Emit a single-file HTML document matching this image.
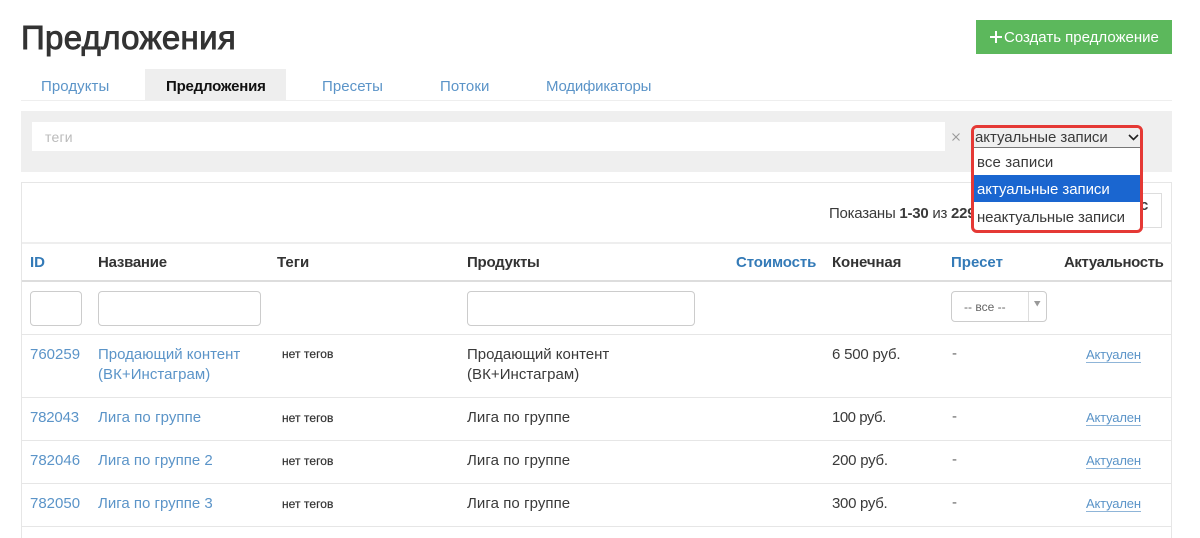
<!DOCTYPE html>
<html lang="ru"><head><meta charset="utf-8"><title>Предложения</title>
<style>
html,body{margin:0;padding:0;background:#fff}
body{width:1200px;height:538px;position:relative;overflow:hidden;font-family:"Liberation Sans",sans-serif;font-size:15px;color:#3a3a3a}
.a{position:absolute;white-space:nowrap;line-height:20px}
.b{position:absolute;box-sizing:border-box}
.h{font-weight:bold;color:#333}
.t{font-size:12px;color:#333;-webkit-text-stroke:.2px #333;letter-spacing:.05px}
.i{position:absolute;box-sizing:border-box;border:1px solid #ccc;border-radius:4px;background:#fff}
.r{position:absolute;left:22px;width:1150px;height:1px;background:#e6e6e6}
.u{color:#5b94c8;font-size:13px;border-bottom:1px solid #8fb5d8;line-height:15px;letter-spacing:-.17px}
</style></head><body>
<h1 class="a" style="left:21px;top:18px;margin:0;font-size:33px;line-height:40px;font-weight:normal;color:#333;letter-spacing:.32px;-webkit-text-stroke:.9px #333">Предложения</h1>
<div class="b" style="left:976px;top:20px;width:196px;height:34px;background:#5cb85c"></div>
<svg class="b" style="left:990px;top:31px" width="12" height="12"><path d="M6 0v12M0 6h12" stroke="#fff" stroke-width="2"/></svg>
<div class="a" style="left:1004px;top:28px;color:#fff">Создать предложение</div>

<div class="b" style="left:145px;top:69px;width:141px;height:31px;background:#eee"></div>
<div class="b" style="left:21px;top:100px;width:1151px;height:1px;background:#eee"></div>
<a class="a" style="left:41px;top:77px;color:#5b94c8;letter-spacing:.07px">Продукты</a>
<b class="a" style="left:166px;top:77px;color:#111;letter-spacing:-.2px">Предложения</b>
<a class="a" style="left:322px;top:77px;color:#5b94c8;letter-spacing:.07px">Пресеты</a>
<a class="a" style="left:440px;top:77px;color:#5b94c8;letter-spacing:.13px">Потоки</a>
<a class="a" style="left:546px;top:77px;color:#5b94c8;letter-spacing:-.2px">Модификаторы</a>

<div class="b" style="left:21px;top:111px;width:1151px;height:61px;background:#efefef"></div>
<div class="b" style="left:32px;top:122px;width:913px;height:29px;background:#fff"></div>
<div class="a" style="left:45px;top:127px;color:#bbb;font-size:14px;letter-spacing:.2px">теги</div>
<svg class="b" style="left:952px;top:133px" width="8" height="8"><path d="M.5.5l7 7M7.500.5l-7 7" stroke="#999" stroke-width="1.100"/></svg>

<div class="b" style="left:21px;top:182px;width:1151px;height:356px;border:1px solid #e6e6e6;border-bottom:0"></div>
<div class="a" style="left:829px;top:204px;letter-spacing:-.25px">Показаны <b>1-30</b> из <b>229</b></div>
<div class="b" style="left:1100px;top:193px;width:62px;height:35px;border:1px solid #ddd;background:#fff"></div>
<b class="a" style="left:1140px;top:196px">с</b>

<div class="b" style="left:22px;top:242px;width:1150px;height:2px;background:#eee"></div>
<b class="a" style="left:30px;top:253px;color:#337ab7">ID</b>
<b class="a h" style="left:98px;top:253px;letter-spacing:-.25px">Название</b>
<b class="a h" style="left:277px;top:253px">Теги</b>
<b class="a h" style="left:467px;top:253px;letter-spacing:-.25px">Продукты</b>
<b class="a" style="left:736px;top:253px;color:#337ab7;letter-spacing:-.1px">Стоимость</b>
<b class="a h" style="left:832px;top:253px;letter-spacing:-.12px">Конечная</b>
<b class="a" style="left:951px;top:253px;color:#337ab7">Пресет</b>
<b class="a h" style="left:1064px;top:253px;letter-spacing:-.4px">Актуальность</b>
<div class="b" style="left:22px;top:280px;width:1150px;height:2px;background:#ddd"></div>

<div class="i" style="left:30px;top:291px;width:52px;height:35px"></div>
<div class="i" style="left:98px;top:291px;width:163px;height:35px"></div>
<div class="i" style="left:467px;top:291px;width:228px;height:35px"></div>
<div class="i" style="left:951px;top:291px;width:96px;height:31px"></div>
<div class="b" style="left:1028px;top:292px;width:1px;height:29px;background:#ddd"></div>
<svg class="b" style="left:1034px;top:301px" width="7" height="6"><path d="M0 0h6.500L3.250 5.500z" fill="#999"/></svg>
<div class="a" style="left:964px;top:297px;font-size:12px;color:#666">-- все --</div>

<div class="r" style="top:334px"></div>
<div class="r" style="top:397px"></div>
<div class="r" style="top:440px"></div>
<div class="r" style="top:483px"></div>
<div class="r" style="top:526px"></div>

<a class="a" style="left:30px;top:345px;color:#5b94c8">760259</a>
<a class="a" style="left:98px;top:345px;color:#5b94c8">Продающий контент</a>
<a class="a" style="left:98px;top:365px;color:#5b94c8;letter-spacing:.05px">(ВК+Инстаграм)</a>
<div class="a t" style="left:282px;top:344px">нет тегов</div>
<div class="a" style="left:467px;top:345px">Продающий контент</div>
<div class="a" style="left:467px;top:365px;letter-spacing:.05px">(ВК+Инстаграм)</div>
<div class="a" style="left:832px;top:345px;letter-spacing:-.2px">6 500 руб.</div>
<div class="a" style="left:952px;top:344px;color:#666">-</div>
<span class="a u" style="left:1086px;top:347px">Актуален</span>

<a class="a" style="left:30px;top:408px;color:#5b94c8;letter-spacing:-.2px">782043</a>
<a class="a" style="left:98px;top:408px;color:#5b94c8;letter-spacing:.07px">Лига по группе</a>
<div class="a t" style="left:282px;top:408px">нет тегов</div>
<div class="a" style="left:467px;top:408px;letter-spacing:.07px">Лига по группе</div>
<div class="a" style="left:832px;top:408px;letter-spacing:-.5px">100 руб.</div>
<div class="a" style="left:952px;top:407px;color:#666">-</div>
<span class="a u" style="left:1086px;top:410px">Актуален</span>

<a class="a" style="left:30px;top:451px;color:#5b94c8">782046</a>
<a class="a" style="left:98px;top:451px;color:#5b94c8">Лига по группе 2</a>
<div class="a t" style="left:282px;top:451px">нет тегов</div>
<div class="a" style="left:467px;top:451px;letter-spacing:.07px">Лига по группе</div>
<div class="a" style="left:832px;top:451px;letter-spacing:-.25px">200 руб.</div>
<div class="a" style="left:952px;top:450px;color:#666">-</div>
<span class="a u" style="left:1086px;top:453px">Актуален</span>

<a class="a" style="left:30px;top:494px;color:#5b94c8">782050</a>
<a class="a" style="left:98px;top:494px;color:#5b94c8">Лига по группе 3</a>
<div class="a t" style="left:282px;top:494px">нет тегов</div>
<div class="a" style="left:467px;top:494px;letter-spacing:.07px">Лига по группе</div>
<div class="a" style="left:832px;top:494px;letter-spacing:-.3px">300 руб.</div>
<div class="a" style="left:952px;top:493px;color:#666">-</div>
<span class="a u" style="left:1086px;top:496px">Актуален</span>

<div class="b" style="left:971px;top:125px;width:172px;height:108px;border:3px solid #e53935;border-radius:6px;background:#fff;overflow:hidden">
  <div class="b" style="left:0;top:0;width:166px;height:20px;background:#efefef;border-bottom:1px solid #777"></div>
  <div class="a" style="left:1px;top:0;letter-spacing:-.05px">актуальные записи</div>
  <svg class="b" style="left:154px;top:6px" width="11" height="8"><path d="M1 1l4.500 4.500L10 1" fill="none" stroke="#222" stroke-width="1.600"/></svg>
  <div class="a" style="left:3px;top:25px;letter-spacing:.1px">все записи</div>
  <div class="b" style="left:0;top:47px;width:166px;height:27px;background:#1a66d0"></div>
  <div class="a" style="left:3px;top:52px;color:#fff;letter-spacing:-.05px">актуальные записи</div>
  <div class="a" style="left:3px;top:80px;letter-spacing:-.12px">неактуальные записи</div>
</div>
</body></html>
